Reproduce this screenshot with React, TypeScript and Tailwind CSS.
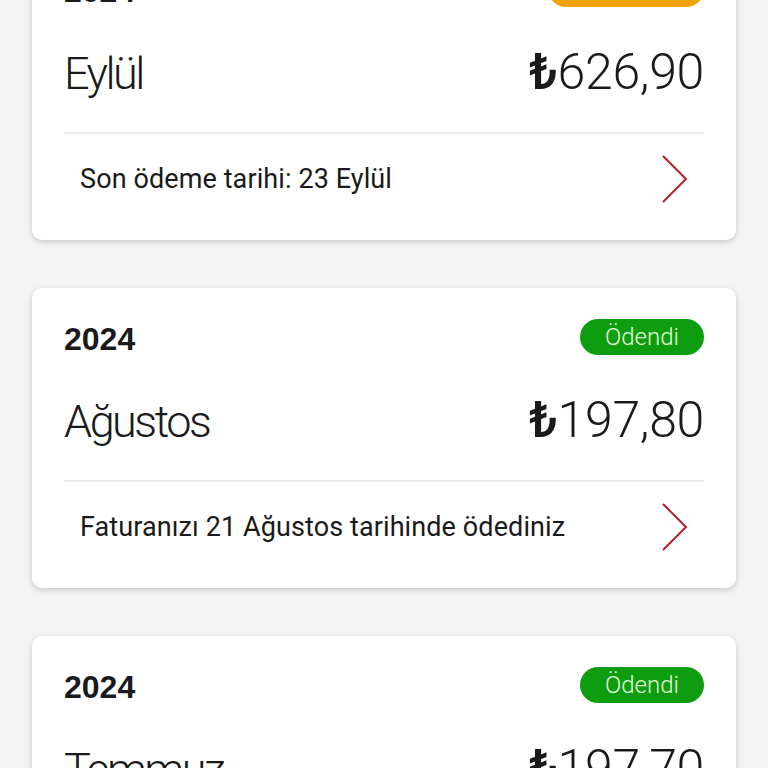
import React from 'react';

interface Bill {
  year: string;
  month: string;
  amount: string;
  status: string;
  note: string;
  paid: boolean;
}

const bills: Bill[] = [
  {
    year: '2024',
    month: 'Eylül',
    amount: '626,90',
    status: 'Ödenmedi',
    note: 'Son ödeme tarihi: 23 Eylül',
    paid: false,
  },
  {
    year: '2024',
    month: 'Ağustos',
    amount: '197,80',
    status: 'Ödendi',
    note: 'Faturanızı 21 Ağustos tarihinde ödediniz',
    paid: true,
  },
  {
    year: '2024',
    month: 'Temmuz',
    amount: '197,70',
    status: 'Ödendi',
    note: 'Faturanızı 22 Temmuz tarihinde ödediniz',
    paid: true,
  },
];

const Chevron: React.FC = () => (
  <svg width="28" height="50" viewBox="0 0 28 50" fill="none">
    <path d="M3 2 L26 25 L3 48" stroke="#b8202b" strokeWidth="2" strokeLinejoin="miter" />
  </svg>
);

const BillCard: React.FC<{ bill: Bill; first?: boolean }> = ({ bill, first }) => {
  return (
    <div
      className={
        'bg-white rounded-[10px] shadow-[0_2px_6px_rgba(0,0,0,0.18)] px-8 pt-[31px] pb-4 ' +
        (first ? '-mt-[60px]' : '')
      }
    >
      <div className="flex h-9 items-center justify-between">
        <span className="pt-1 font-['Liberation_Sans',sans-serif] text-[32px] font-bold leading-none text-[#1a1a1a]">
          {bill.year}
        </span>
        {bill.paid ? (
          <span className="flex h-9 w-[124px] items-center justify-center rounded-full bg-[#0e9c10] font-['Roboto',sans-serif] text-[24px] font-light text-[#e2ffd8]">
            {bill.status}
          </span>
        ) : (
          <span className="flex h-9 w-[156px] items-center justify-center rounded-full bg-[#f0a30a] font-['Roboto',sans-serif] text-[24px] font-light text-white">
            {bill.status}
          </span>
        )}
      </div>

      <div className="mt-10 flex h-[50px] items-baseline justify-between font-['Roboto',sans-serif] leading-none text-[#1a1a1a]">
        <span className="text-[45px] font-light tracking-[-2.5px]">{bill.month}</span>
        <span className="text-[50px] font-light tracking-[-0.3px]">
          <span className="font-medium">₺</span>
          {bill.amount}
        </span>
      </div>

      <div className="mt-[35px] h-[2px] bg-[#e9e9e9]" />

      <div className="flex h-[90px] items-center justify-between px-4">
        <span className="font-['Roboto',sans-serif] text-[27px] tracking-[0.1px] text-[#1a1a1a]">
          {bill.note}
        </span>
        <Chevron />
      </div>
    </div>
  );
};

const App: React.FC = () => {
  return (
    <div className="h-[768px] overflow-hidden bg-[#f4f4f4]">
      <div className="flex flex-col gap-12 px-8">
        {bills.map((bill, i) => (
          <BillCard key={i} bill={bill} first={i === 0} />
        ))}
      </div>
    </div>
  );
};

export default App;
